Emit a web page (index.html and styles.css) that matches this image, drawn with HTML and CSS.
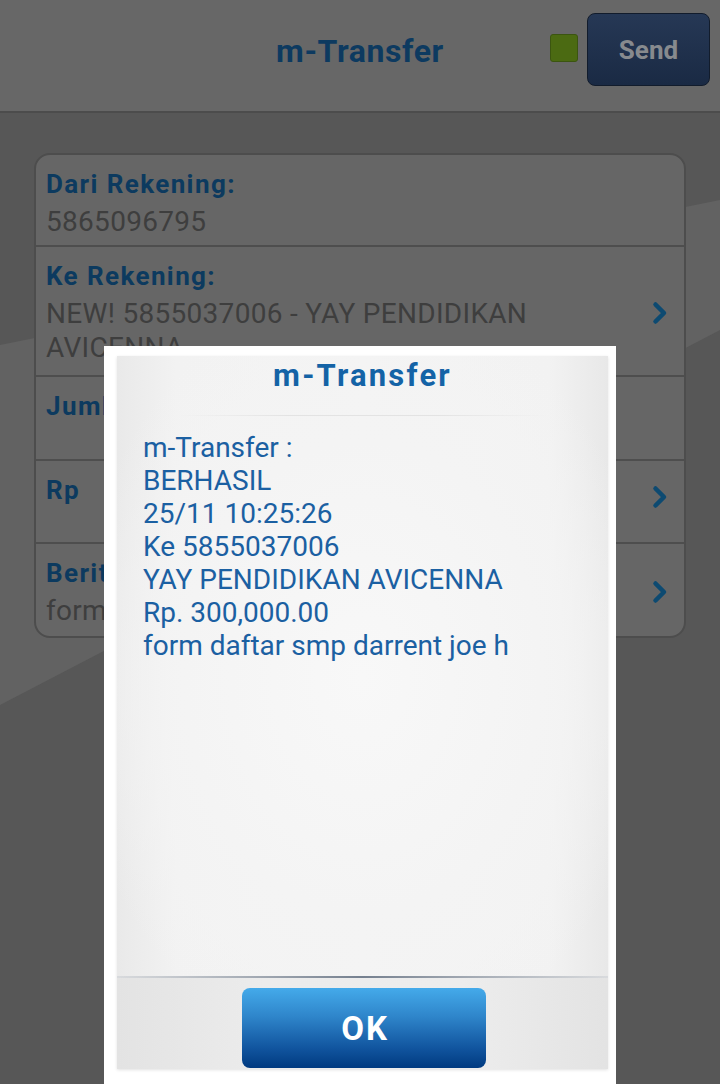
FILE: index.html
```html
<!DOCTYPE html>
<html lang="id">
<head>
<meta charset="utf-8">
<title>m-Transfer</title>
<link rel="stylesheet" href="styles.css">
</head>
<body>
<div class="screen">
  <div class="band"></div>
  <header class="topbar">
    <div class="topbar-side"></div>
    <h1 class="topbar-title">m-Transfer</h1>
    <div class="topbar-actions">
      <span class="status-dot"></span>
      <button class="send-btn">Send</button>
    </div>
  </header>

  <main class="content">
    <section class="form-card">
      <div class="form-row row-dari">
        <div class="row-text">
          <div class="row-label">Dari Rekening:</div>
          <div class="row-value">5865096795</div>
        </div>
      </div>
      <div class="form-row row-ke">
        <div class="row-text">
          <div class="row-label">Ke Rekening:</div>
          <div class="row-value">NEW! 5855037006 - YAY PENDIDIKAN<br>AVICENNA</div>
        </div>
        <svg class="chevron" viewBox="0 0 16 24" aria-hidden="true"><path d="M3.5 3.5 L12 12 L3.5 20.5"/></svg>
      </div>
      <div class="form-row row-jumlah">
        <div class="row-text">
          <div class="row-label">Jumlah:</div>
        </div>
      </div>
      <div class="form-row row-rp">
        <div class="row-text">
          <div class="row-label">Rp</div>
        </div>
        <svg class="chevron" viewBox="0 0 16 24" aria-hidden="true"><path d="M3.5 3.5 L12 12 L3.5 20.5"/></svg>
      </div>
      <div class="form-row row-berita">
        <div class="row-text">
          <div class="row-label">Berita:</div>
          <div class="row-value">form daftar smp darrent joe h</div>
        </div>
        <svg class="chevron" viewBox="0 0 16 24" aria-hidden="true"><path d="M3.5 3.5 L12 12 L3.5 20.5"/></svg>
      </div>
    </section>
  </main>

  <div class="dialog" role="dialog">
    <div class="dialog-panel">
      <div class="dialog-title">m-Transfer</div>
      <div class="dialog-body">
        <div>m-Transfer :</div>
        <div>BERHASIL</div>
        <div>25/11 10:25:26</div>
        <div>Ke 5855037006</div>
        <div>YAY PENDIDIKAN AVICENNA</div>
        <div>Rp. 300,000.00</div>
        <div>form daftar smp darrent joe h</div>
      </div>
      <div class="dialog-footer">
        <button class="ok-btn">OK</button>
      </div>
    </div>
  </div>
</div>
</body>
</html>
```

FILE: styles.css
```css
* { box-sizing: border-box; }

html, body {
  margin: 0;
  padding: 0;
  height: 100%;
}

body {
  font-family: Roboto, "Noto Sans", "Liberation Sans", sans-serif;
  background: #585858;
  overflow: hidden;
}

.screen {
  position: relative;
  width: 720px;
  height: 1084px;
  background: #575757;
  overflow: hidden;
}

.band {
  position: absolute;
  left: 0;
  top: 0;
  width: 720px;
  height: 1084px;
  background: #626262;
  clip-path: polygon(0 345px, 720px 200px, 720px 330px, 0 705px);
}

/* ---------- top bar ---------- */
.topbar {
  position: relative;
  height: 113px;
  padding-bottom: 12px;
  background: #676767;
  border-bottom: 2px solid #4c4c4c;
  display: grid;
  grid-template-columns: 1fr auto 1fr;
  align-items: center;
}

.topbar-title {
  margin: 0;
  padding-top: 2px;
  font-size: 32px;
  font-weight: 700;
  letter-spacing: 0.6px;
  color: #0d3a60;
  line-height: 36px;
}

.topbar-actions {
  display: flex;
  justify-content: flex-end;
  align-items: center;
  gap: 9px;
  padding-right: 10px;
}

.status-dot {
  width: 28px;
  height: 28px;
  margin-bottom: 3px;
  border-radius: 3px;
  background: #4b6a12;
  border: 1px solid #3b5510;
}

.send-btn {
  width: 123px;
  height: 73px;
  border-radius: 8px;
  border: 1px solid #121c2c;
  background: linear-gradient(#263855, #1a2a44);
  color: #878a8e;
  font-family: Roboto, "Noto Sans", sans-serif;
  font-size: 26px;
  font-weight: 700;
  padding: 0;
}

/* ---------- form card ---------- */
.content {
  position: relative;
  padding: 40px 34px 0 34px;
}

.form-card {
  width: 652px;
  background: #666666;
  border: 2px solid #4d4d4d;
  border-radius: 16px;
  overflow: hidden;
}

.form-row {
  display: flex;
  align-items: center;
  padding: 0 16px 0 10px;
  border-bottom: 2px solid #4e4e4e;
}

.form-row:last-child { border-bottom: none; }

.row-text {
  flex: 1;
  align-self: flex-start;
  padding-top: 12px;
}

.row-dari { height: 92px; }
.row-ke { height: 130px; }
.row-jumlah { height: 84px; }
.row-rp { height: 83px; }
.row-berita { height: 92px; }

.row-label {
  font-size: 26px;
  font-weight: 700;
  letter-spacing: 1.4px;
  line-height: 34px;
  color: #0c3a5f;
}

.row-value {
  margin-top: 4px;
  font-size: 28px;
  letter-spacing: 0.3px;
  line-height: 34px;
  color: #3e3e3e;
}

.row-ke .chevron { margin-top: 4px; }
.row-rp .chevron { margin-bottom: 10px; }
.row-berita .chevron { margin-top: 4px; }

.chevron {
  width: 16px;
  height: 24px;
  flex: none;
}

.chevron path {
  fill: none;
  stroke: #0d4a71;
  stroke-width: 4.5;
  stroke-linecap: round;
  stroke-linejoin: round;
}

/* ---------- dialog ---------- */
.dialog {
  position: absolute;
  left: 104px;
  top: 346px;
  width: 512px;
  height: 738px;
  background: #ffffff;
  padding: 10px 8px 15px 13px;
}

.dialog-panel {
  height: 100%;
  display: flex;
  flex-direction: column;
  background:
    radial-gradient(ellipse 60% 55% at 50% 45%, #f8f8f8 0%, #f4f4f4 60%, rgba(244,244,244,0) 100%),
    linear-gradient(90deg, #e9e9e9 0%, #f2f2f2 12%, #f4f4f4 50%, #f2f2f2 88%, #e8e8e8 100%);
  box-shadow: 0 1px 3px rgba(0,0,0,0.12);
}

.dialog-title {
  height: 60px;
  text-align: center;
  font-size: 31px;
  font-weight: 700;
  letter-spacing: 2.2px;
  line-height: 40px;
  color: #1463a6;
  position: relative;
}

.dialog-title::after {
  content: "";
  position: absolute;
  left: 60px;
  right: 60px;
  bottom: 0;
  height: 1px;
  background: linear-gradient(90deg, rgba(225,225,225,0), #e3e3e3 30%, #e3e3e3 70%, rgba(225,225,225,0));
}

.dialog-body {
  flex: 1;
  padding: 15px 0 0 26px;
  font-size: 28px;
  line-height: 33px;
  color: #1b60a2;
}

.dialog-footer {
  height: 93px;
  padding-top: 10px;
  display: flex;
  justify-content: center;
  align-items: flex-start;
  border-top: 2px solid transparent;
  background:
    linear-gradient(90deg, rgba(200,205,212,0.4), #75808f 50%, rgba(200,205,212,0.4)) top / 100% 2px no-repeat border-box,
    linear-gradient(90deg, #e3e3e3, #ececec 30%, #ededed 70%, #e3e3e3);
}

.ok-btn {
  width: 244px;
  height: 80px;
  margin-left: 3px;
  border: none;
  border-radius: 8px;
  background: linear-gradient(#44aaea 0%, #2f86cb 35%, #11559f 75%, #003a80 100%);
  color: #ffffff;
  font-family: Roboto, "Noto Sans", sans-serif;
  font-size: 33px;
  font-weight: 700;
  letter-spacing: 2px;
  text-indent: 2px;
  padding: 0;
}
```
